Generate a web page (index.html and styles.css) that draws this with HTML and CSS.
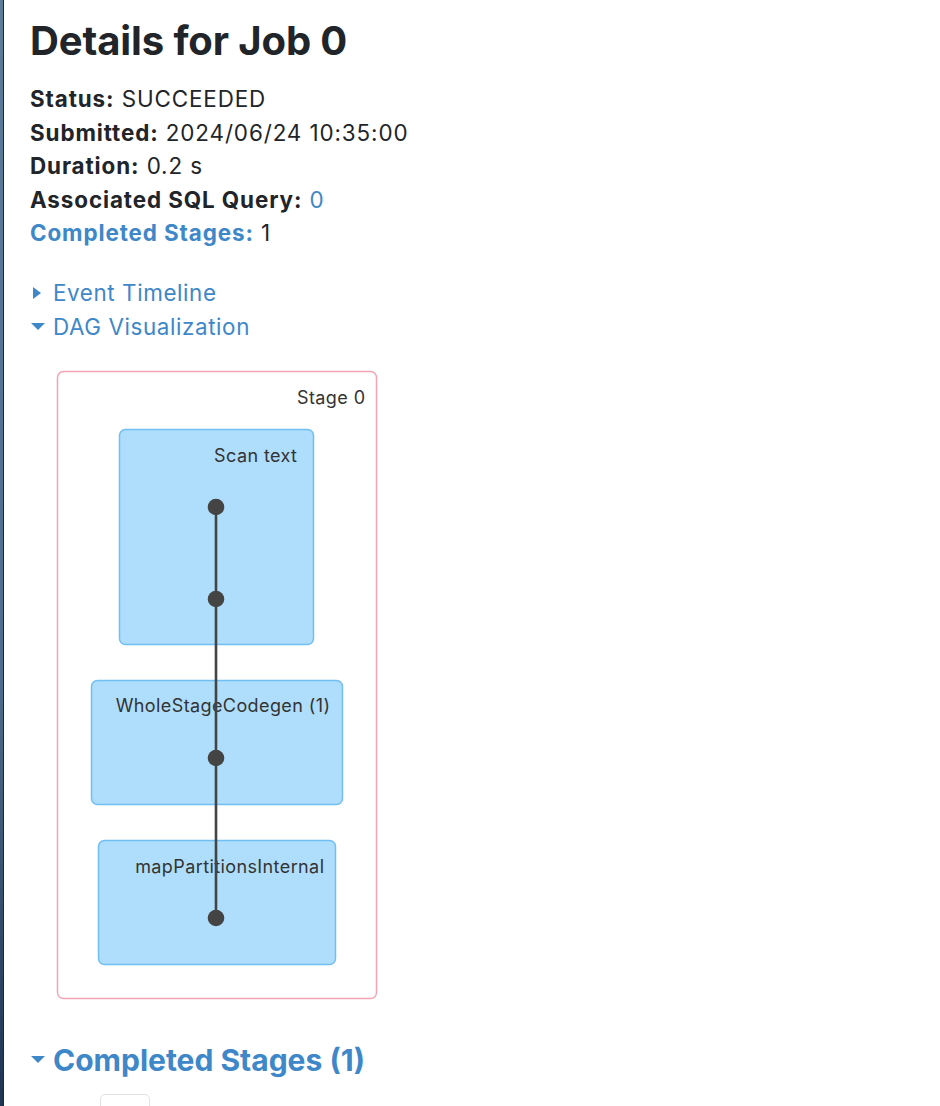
FILE: index.html
```html
<!DOCTYPE html>
<html lang="en">
<head>
<meta charset="utf-8">
<title>Details for Job 0</title>
<link rel="stylesheet" href="styles.css">
</head>
<body>
<div class="window">
  <div class="edge"></div>
  <main class="content">
    <h3 class="title">Details for Job 0</h3>
    <ul class="summary">
      <li><strong>Status:</strong> SUCCEEDED</li>
      <li><strong>Submitted:</strong> 2024/06/24 10:35:00</li>
      <li><strong>Duration:</strong> 0.2 s</li>
      <li><strong>Associated SQL Query:</strong> <a class="link" href="#">0</a></li>
      <li><a class="link strong" href="#">Completed Stages:</a> 1</li>
    </ul>
    <div class="toggles">
      <a class="toggle" href="#"><span class="arrow arrow-right"></span>Event Timeline</a>
      <a class="toggle" href="#"><span class="arrow arrow-down"></span>DAG Visualization</a>
    </div>
    <svg class="dag" width="360" height="640" viewBox="0 0 360 640">
      <rect class="stage" x="27.5" y="6.5" width="319" height="627" rx="6"/>
      <text class="stage-label" x="335.4" y="39">Stage 0</text>
      <rect class="node" x="89.5" y="64.5" width="194" height="215" rx="6"/>
      <text class="node-label" x="267.4" y="97">Scan text</text>
      <rect class="node" x="61.5" y="315.5" width="251" height="124" rx="6"/>
      <text class="node-label" x="300.4" y="347">WholeStageCodegen (1)</text>
      <rect class="node" x="68.5" y="475.5" width="237" height="124" rx="6"/>
      <text class="node-label" x="294.4" y="507.5">mapPartitionsInternal</text>
      <line class="edge-line" x1="186" y1="142" x2="186" y2="553"/>
      <circle class="dot" cx="186" cy="142" r="8.3"/>
      <circle class="dot" cx="186" cy="234" r="8.3"/>
      <circle class="dot" cx="186" cy="393" r="8.3"/>
      <circle class="dot" cx="186" cy="553" r="8.3"/>
    </svg>
    <h4 class="section"><a class="toggle big" href="#"><span class="arrow arrow-down"></span>Completed Stages (1)</a></h4>
    <div class="pager"></div>
  </main>
</div>
</body>
</html>
```
FILE: styles.css
```css
html, body {
  margin: 0;
  padding: 0;
  background: #ffffff;
}
body {
  font-family: Inter, "Liberation Sans", Arial, sans-serif;
  font-size: 22.4px;
  line-height: 33.6px;
  color: #212529;
  height: 1106px;
  overflow: hidden;
}
.window {
  display: flex;
  min-height: 1106px;
}
.edge {
  width: 3px;
  flex: none;
  background: linear-gradient(to bottom, #5d7c9c 0%, #4f6d8e 60%, #1d3150 100%);
  border-right: 1px solid #1d2733;
}
.content {
  flex: 1;
  padding-left: 26px;
}
.title {
  margin: 17px 0 17px;
  font-size: 40px;
  line-height: 48px;
  font-weight: 700;
  letter-spacing: -0.12px;
  color: #212529;
}
.summary {
  list-style: none;
  margin: 0;
  padding: 0;
  letter-spacing: 0.9px;
}
.summary strong, .strong {
  font-weight: 700;
}
.link {
  color: #3e87c8;
  text-decoration: none;
}
.toggles {
  margin-top: 26px;
  display: flex;
  flex-direction: column;
  letter-spacing: 0.6px;
}
.toggle {
  display: flex;
  align-items: center;
  color: #3e87c8;
  text-decoration: none;
}
.arrow {
  width: 23px;
  height: 14px;
  display: inline-flex;
  align-items: center;
  flex: none;
}
.arrow-right::before {
  content: "";
  margin-left: 3px;
  border-top: 6.5px solid transparent;
  border-bottom: 6.5px solid transparent;
  border-left: 8px solid #3e87c8;
}
.arrow-down::before {
  content: "";
  margin-left: 1px;
  border-left: 7px solid transparent;
  border-right: 7px solid transparent;
  border-top: 7px solid #3e87c8;
}
.dag {
  display: block;
  margin-top: 21.4px;
}
.stage {
  fill: #ffffff;
  stroke: #f2a4b4;
  stroke-width: 1.5;
}
.stage-label, .node-label {
  font-family: Inter, "Liberation Sans", Arial, sans-serif;
  font-size: 18px;
  letter-spacing: 0.4px;
  fill: #333333;
  text-anchor: end;
}
.node {
  fill: #aedefc;
  stroke: #72bef2;
  stroke-width: 1.5;
}
.edge-line {
  stroke: #444444;
  stroke-width: 2.6;
}
.dot {
  fill: #444444;
}
.section {
  margin: 35px 0 0;
  font-size: 30px;
  line-height: 40px;
  font-weight: 700;
}
.pager {
  margin: 14px 0 0 70px;
  width: 48px;
  height: 30px;
  border: 1.5px solid #dee2e6;
  border-radius: 5px;
}
```
